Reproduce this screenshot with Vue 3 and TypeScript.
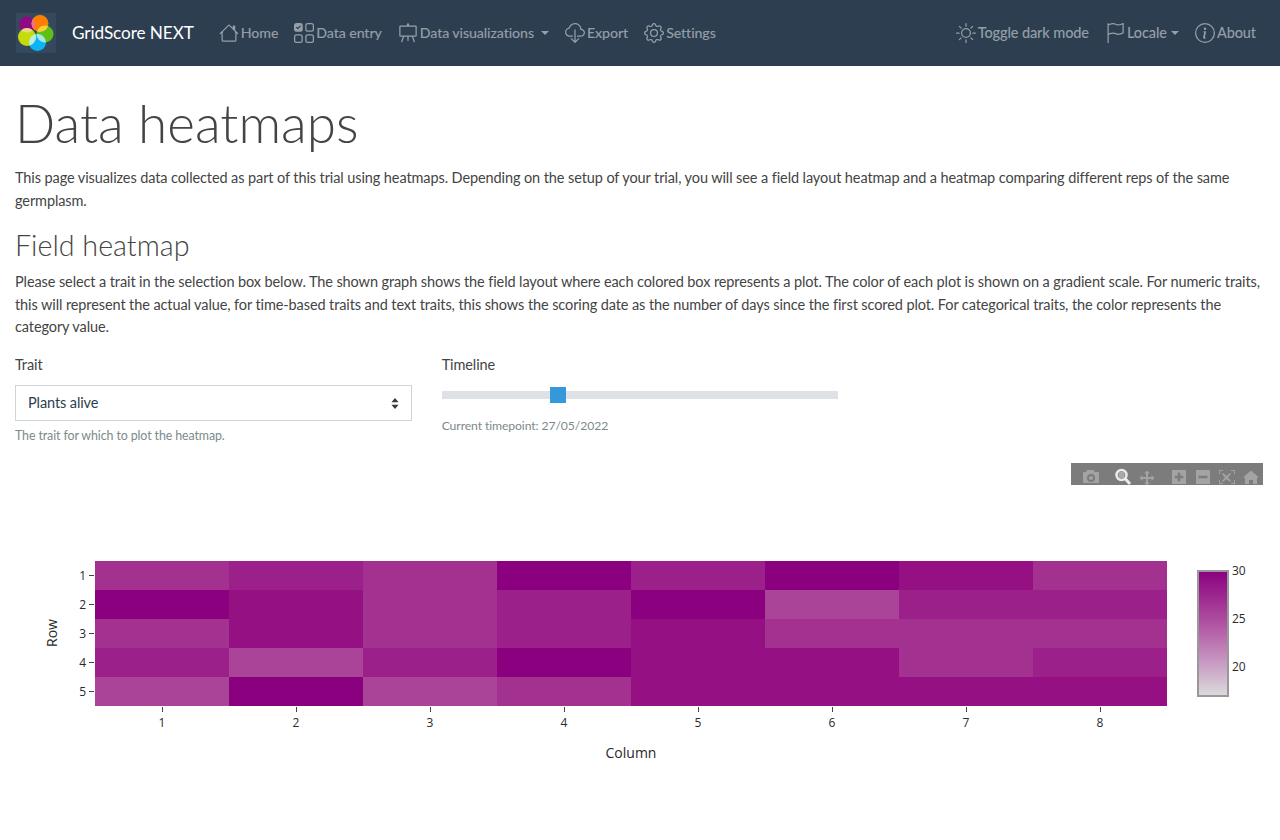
<template>
  <div class="page">
    <nav class="navbar">
      <a class="brand">
        <svg class="logo" width="40" height="40" viewBox="0 0 40 40">
          <defs>
            <clipPath v-for="(petal, i) in petals" :id="`petal-${i}`" :key="i">
              <circle :cx="petal.x" :cy="petal.y" :r="petal.r" />
            </clipPath>
          </defs>
          <rect width="40" height="40" fill="#34495e" />
          <circle v-for="petal in petals" :key="petal.fill" :cx="petal.x" :cy="petal.y" :r="petal.r" :fill="petal.fill" />
          <circle
            v-for="(petal, i) in petals"
            :key="petal.mix"
            :cx="petal.x"
            :cy="petal.y"
            :r="petal.r"
            :fill="petal.mix"
            :clip-path="`url(#petal-${(i + 1) % petals.length})`"
          />
        </svg>
        <span>GridScore NEXT</span>
      </a>
      <ul class="nav-list">
        <li v-for="item in leftNav" :key="item.label" class="nav-item">
          <svg class="bi" viewBox="0 0 16 16" fill="currentColor"><path v-for="d in item.paths" :key="d" fill-rule="evenodd" :d="d" /></svg>
          <span>{{ item.label }}</span>
          <i v-if="item.caret" class="caret" />
        </li>
      </ul>
      <ul class="nav-list right">
        <li v-for="item in rightNav" :key="item.label" class="nav-item">
          <svg class="bi" viewBox="0 0 16 16" fill="currentColor"><path v-for="d in item.paths" :key="d" fill-rule="evenodd" :d="d" /></svg>
          <span>{{ item.label }}</span>
          <i v-if="item.caret" class="caret small" />
        </li>
      </ul>
    </nav>

    <main class="content">
      <h1>Data heatmaps</h1>
      <p>This page visualizes data collected as part of this trial using heatmaps. Depending on the setup of your trial, you will see a field layout heatmap and a heatmap comparing different reps of the same germplasm.</p>
      <h2>Field heatmap</h2>
      <p>Please select a trait in the selection box below. The shown graph shows the field layout where each colored box represents a plot. The color of each plot is shown on a gradient scale. For numeric traits, this will represent the actual value, for time-based traits and text traits, this shows the scoring date as the number of days since the first scored plot. For categorical traits, the color represents the category value.</p>

      <div class="form-row">
        <div class="field">
          <label>Trait</label>
          <div class="select">
            <span>Plants alive</span>
            <svg width="8" height="11" viewBox="0 0 8 11"><path d="M4 0L7.6 4.300H0.4zM4 11L0.4 6.700H7.6z" fill="#343a40" /></svg>
          </div>
          <small class="help">The trait for which to plot the heatmap.</small>
        </div>
        <div class="field">
          <label>Timeline</label>
          <div class="slider"><div class="thumb" /></div>
          <small class="timepoint">Current timepoint: 27/05/2022</small>
        </div>
      </div>

      <div class="plot">
        <div class="modebar">
          <svg width="192" height="22" viewBox="0 0 192 22">
            <g fill="#fff" fill-opacity="0.3">
              <path fill-rule="evenodd" d="M12 9h3l1.5-2h6l1.5 2h3a1 1 0 0 1 1 1v10h-16v-10a1 1 0 0 1 1-1zM20 11a4 4 0 1 0 0 8a4 4 0 0 0 0-8zM20 13a2 2 0 1 1 0 4a2 2 0 0 1 0-4z" />
              <path d="M76 7.5l3 3h-2v3.500h3.500v-2l3 3l-3 3v-2h-3.500v3.500h2l-3 3l-3-3h2v-3.500h-3.500v2l-3-3l3-3v2h3.500v-3.500h-2z" />
              <path fill-rule="evenodd" d="M101 7h14v14h-14zM106.700 12.700v-3h2.600v3h3v2.600h-3v3h-2.600v-3h-3v-2.600z" />
              <path fill-rule="evenodd" d="M125 7h14v14h-14zM127.500 12.700v2.600h9v-2.600z" />
              <path d="M148 7h4v1h-3v3h-1zM160 7h4v4h-1v-3h-3zM148 17h1v3h3v1h-4zM163 17h1v4h-4v-1h3zM152 10l3.500 3l3.500-3l1 1l-3 3.500l3 3.500l-1 1l-3.500-3l-3.500 3l-1-1l3-3.500l-3-3.500z" />
              <path d="M180 7.500l8 7h-2v6.500h-4v-4h-4v4h-4v-6.500h-2z" />
            </g>
            <g fill="none" stroke="#fff" stroke-opacity="0.85">
              <circle cx="50.500" cy="12" r="5" stroke-width="2.500" />
              <path d="M54.500 16l4.500 5" stroke-width="3" />
            </g>
            <rect x="47.500" y="9" width="6" height="6" fill="#fff" fill-opacity="0.35" />
          </svg>
        </div>
        <svg class="chart" width="1250" height="340" viewBox="0 0 1250 340">
          <defs>
            <linearGradient id="scale" x1="0" y1="0" x2="0" y2="1">
              <stop offset="0" stop-color="#8b007f" />
              <stop offset="0.4" stop-color="#ae4f9f" />
              <stop offset="0.7" stop-color="#c592bf" />
              <stop offset="1" stop-color="#dcdcdc" />
            </linearGradient>
          </defs>
          <g v-for="(row, r) in cells" :key="r">
            <rect
              v-for="(level, c) in row"
              :key="c"
              :x="80 + c * 134"
              :y="98 + r * 29"
              width="134"
              height="29"
              :fill="palette[level]"
            />
            <path :d="`M74 ${112.5 + r * 29}h5`" stroke="#444" />
            <text class="tick" x="71" :y="117 + r * 29" text-anchor="end">{{ r + 1 }}</text>
          </g>
          <g v-for="c in 8" :key="c">
            <path :d="`M${147.5 + (c - 1) * 134} 244v5`" stroke="#444" />
            <text class="tick" :x="147 + (c - 1) * 134" y="264" text-anchor="middle">{{ c }}</text>
          </g>
          <text class="axis-title" x="616" y="295" text-anchor="middle">Column</text>
          <text class="axis-title" transform="translate(42 170) rotate(-90)" text-anchor="middle">Row</text>
          <rect x="1183" y="108" width="30" height="125" fill="url(#scale)" stroke="#999" stroke-width="2" />
          <text class="tick" x="1217" y="112">30</text>
          <text class="tick" x="1217" y="160">25</text>
          <text class="tick" x="1217" y="208">20</text>
        </svg>
      </div>
    </main>
  </div>
</template>

<script setup lang="ts">
interface NavItem {
  label: string
  paths: string[]
  caret?: boolean
}

const icons: Record<string, string[]> = {
  house: [
    'M2 13.5V7h1v6.5a.5.5 0 0 0 .5.5h9a.5.5 0 0 0 .5-.5V7h1v6.5a1.5 1.5 0 0 1-1.5 1.5h-9A1.5 1.5 0 0 1 2 13.5zm11-11V6l-2-2V2.5a.5.5 0 0 1 .5-.5h1a.5.5 0 0 1 .5.5z',
    'M7.293 1.5a1 1 0 0 1 1.414 0l6.647 6.646a.5.5 0 0 1-.708.708L8 2.207 1.354 8.854a.5.5 0 1 1-.708-.708L7.293 1.5z'
  ],
  checks: [
    'M2 10h3a1 1 0 0 1 1 1v3a1 1 0 0 1-1 1H2a1 1 0 0 1-1-1v-3a1 1 0 0 1 1-1zm9-9h3a1 1 0 0 1 1 1v3a1 1 0 0 1-1 1h-3a1 1 0 0 1-1-1V2a1 1 0 0 1 1-1zm0 9a1 1 0 0 0-1 1v3a1 1 0 0 0 1 1h3a1 1 0 0 0 1-1v-3a1 1 0 0 0-1-1h-3zm0-10a2 2 0 0 0-2 2v3a2 2 0 0 0 2 2h3a2 2 0 0 0 2-2V2a2 2 0 0 0-2-2h-3zM2 9a2 2 0 0 0-2 2v3a2 2 0 0 0 2 2h3a2 2 0 0 0 2-2v-3a2 2 0 0 0-2-2H2zm7 2a2 2 0 0 1 2-2h3a2 2 0 0 1 2 2v3a2 2 0 0 1-2 2h-3a2 2 0 0 1-2-2v-3zM0 2a2 2 0 0 1 2-2h3a2 2 0 0 1 2 2v3a2 2 0 0 1-2 2H2a2 2 0 0 1-2-2V2zm5.354.854a.5.5 0 1 0-.708-.708L3 3.793l-.646-.647a.5.5 0 1 0-.708.708l1 1a.5.5 0 0 0 .708 0l2-2z'
  ],
  easel: [
    'M8 0a.5.5 0 0 1 .473.337L9.046 2H14a1 1 0 0 1 1 1v7a1 1 0 0 1-1 1h-1.85l1.323 3.837a.5.5 0 1 1-.946.326L11.092 11H8.5v3a.5.5 0 0 1-1 0v-3H4.908l-1.435 4.163a.5.5 0 1 1-.946-.326L3.85 11H2a1 1 0 0 1-1-1V3a1 1 0 0 1 1-1h4.954L7.527.337A.5.5 0 0 1 8 0zM2 3v7h12V3H2z'
  ],
  cloud: [
    'M4.406 1.342A5.53 5.53 0 0 1 8 0c2.69 0 4.923 2 5.166 4.579C14.758 4.804 16 6.137 16 7.773 16 9.569 14.502 11 12.687 11H10a.5.5 0 0 1 0-1h2.688C13.979 10 15 8.988 15 7.773c0-1.216-1.02-2.228-2.313-2.228h-.5v-.5C12.188 2.825 10.328 1 8 1a4.53 4.53 0 0 0-2.941 1.1c-.757.652-1.153 1.438-1.153 2.055v.448l-.445.049C2.064 4.805 1 5.952 1 7.318 1 8.785 2.23 10 3.781 10H6a.5.5 0 0 1 0 1H3.781C1.708 11 0 9.366 0 7.318c0-1.763 1.266-3.223 2.942-3.593.143-.863.698-1.723 1.464-2.383z',
    'M7.646 15.854a.5.5 0 0 0 .708 0l3-3a.5.5 0 0 0-.708-.708L8.5 14.293V5.5a.5.5 0 0 0-1 0v8.793l-2.146-2.147a.5.5 0 0 0-.708.708l3 3z'
  ],
  gear: [
    'M8 4.754a3.246 3.246 0 1 0 0 6.492 3.246 3.246 0 0 0 0-6.492zM5.754 8a2.246 2.246 0 1 1 4.492 0 2.246 2.246 0 0 1-4.492 0z',
    'M9.796 1.343c-.527-1.79-3.065-1.79-3.592 0l-.094.319a.873.873 0 0 1-1.255.52l-.292-.16c-1.64-.892-3.433.902-2.54 2.541l.159.292a.873.873 0 0 1-.52 1.255l-.319.094c-1.79.527-1.79 3.065 0 3.592l.319.094a.873.873 0 0 1 .52 1.255l-.16.292c-.892 1.64.901 3.434 2.541 2.54l.292-.159a.873.873 0 0 1 1.255.52l.094.319c.527 1.79 3.065 1.79 3.592 0l.094-.319a.873.873 0 0 1 1.255-.52l.292.16c1.64.893 3.434-.902 2.54-2.541l-.159-.292a.873.873 0 0 1 .52-1.255l.319-.094c1.79-.527 1.79-3.065 0-3.592l-.319-.094a.873.873 0 0 1-.52-1.255l.16-.292c.893-1.64-.902-3.433-2.541-2.54l-.292.159a.873.873 0 0 1-1.255-.52l-.094-.319zm-2.633.283c.246-.835 1.428-.835 1.674 0l.094.319a1.873 1.873 0 0 0 2.693 1.115l.291-.16c.764-.415 1.6.42 1.184 1.185l-.159.292a1.873 1.873 0 0 0 1.116 2.692l.318.094c.835.246.835 1.428 0 1.674l-.319.094a1.873 1.873 0 0 0-1.115 2.693l.16.291c.415.764-.42 1.6-1.185 1.184l-.291-.159a1.873 1.873 0 0 0-2.693 1.116l-.094.318c-.246.835-1.428.835-1.674 0l-.094-.319a1.873 1.873 0 0 0-2.692-1.115l-.292.16c-.764.415-1.6-.42-1.184-1.185l.159-.291A1.873 1.873 0 0 0 1.945 8.93l-.319-.094c-.835-.246-.835-1.428 0-1.674l.319-.094A1.873 1.873 0 0 0 3.06 4.377l-.16-.292c-.415-.764.42-1.6 1.185-1.184l.292.159a1.873 1.873 0 0 0 2.692-1.115l.094-.319z'
  ],
  sun: [
    'M8 11a3 3 0 1 1 0-6 3 3 0 0 1 0 6zm0 1a4 4 0 1 0 0-8 4 4 0 0 0 0 8zM8 0a.5.5 0 0 1 .5.5v2a.5.5 0 0 1-1 0v-2A.5.5 0 0 1 8 0zm0 13a.5.5 0 0 1 .5.5v2a.5.5 0 0 1-1 0v-2A.5.5 0 0 1 8 13zm8-5a.5.5 0 0 1-.5.5h-2a.5.5 0 0 1 0-1h2a.5.5 0 0 1 .5.5zM3 8a.5.5 0 0 1-.5.5h-2a.5.5 0 0 1 0-1h2A.5.5 0 0 1 3 8zm10.657-5.657a.5.5 0 0 1 0 .707l-1.414 1.415a.5.5 0 1 1-.707-.708l1.414-1.414a.5.5 0 0 1 .707 0zm-9.193 9.193a.5.5 0 0 1 0 .707L3.05 13.657a.5.5 0 0 1-.707-.707l1.414-1.414a.5.5 0 0 1 .707 0zm9.193 2.121a.5.5 0 0 1-.707 0l-1.414-1.414a.5.5 0 0 1 .707-.707l1.414 1.414a.5.5 0 0 1 0 .707zM4.464 4.465a.5.5 0 0 1-.707 0L2.343 3.05a.5.5 0 1 1 .707-.707l1.414 1.414a.5.5 0 0 1 0 .708z'
  ],
  flag: [
    'M14.778.085A.5.5 0 0 1 15 .5V8a.5.5 0 0 1-.314.464L14.5 8l.186.464-.003.001-.006.003-.023.009a12.435 12.435 0 0 1-.397.15c-.264.095-.631.223-1.047.35-.816.252-1.879.523-2.71.523-.847 0-1.548-.28-2.158-.525l-.028-.01C7.68 8.71 7.14 8.5 6.5 8.5c-.7 0-1.638.23-2.437.477A19.626 19.626 0 0 0 3 9.342V15.5a.5.5 0 0 1-1 0V.5a.5.5 0 0 1 1 0v.282c.226-.079.496-.17.79-.26C4.606.272 5.67 0 6.5 0c.84 0 1.524.277 2.121.519l.043.018C9.286.788 9.828 1 10.5 1c.7 0 1.638-.23 2.437-.477a19.587 19.587 0 0 0 1.349-.476l.019-.007.004-.002h.001M14 1.221c-.22.078-.48.167-.766.255-.81.252-1.872.523-2.734.523-.886 0-1.592-.286-2.203-.534l-.008-.003C7.662 1.21 7.139 1 6.5 1c-.669 0-1.606.229-2.415.478A21.294 21.294 0 0 0 3 1.845v6.433c.22-.078.48-.167.766-.255C4.576 7.77 5.638 7.5 6.5 7.5c.847 0 1.548.28 2.158.525l.028.01C9.32 8.29 9.86 8.5 10.5 8.5c.668 0 1.606-.229 2.415-.478A21.317 21.317 0 0 0 14 7.655V1.222z'
  ],
  info: [
    'M8 15A7 7 0 1 1 8 1a7 7 0 0 1 0 14zm0 1A8 8 0 1 0 8 0a8 8 0 0 0 0 16z',
    'm8.93 6.588-2.29.287-.082.38.45.083c.294.07.352.176.288.469l-.738 3.468c-.194.897.105 1.319.808 1.319.545 0 1.178-.252 1.465-.598l.088-.416c-.2.176-.492.246-.686.246-.275 0-.375-.193-.304-.533L8.93 6.588zM9 4.5a1 1 0 1 1-2 0 1 1 0 0 1 2 0z'
  ]
}

const leftNav: NavItem[] = [
  { label: 'Home', paths: icons.house },
  { label: 'Data entry', paths: icons.checks },
  { label: 'Data visualizations', paths: icons.easel, caret: true },
  { label: 'Export', paths: icons.cloud },
  { label: 'Settings', paths: icons.gear }
]

const rightNav: NavItem[] = [
  { label: 'Toggle dark mode', paths: icons.sun },
  { label: 'Locale', paths: icons.flag, caret: true },
  { label: 'About', paths: icons.info }
]

// logo circles, mix = colour where a circle overlaps the next one
const petals = [
  { x: 11, y: 11.5, r: 8, fill: '#8d0a84', mix: '#f2708c' },
  { x: 24, y: 10.5, r: 8.5, fill: '#ff8000', mix: '#f8cf3c' },
  { x: 29, y: 21, r: 8.5, fill: '#61bf14', mix: '#a8e8d8' },
  { x: 21.5, y: 29.5, r: 8.5, fill: '#0db4f5', mix: '#b8eee4' },
  { x: 11, y: 24, r: 9, fill: '#c4dc0c', mix: '#ecd68c' }
]

const palette = ['#8b007f', '#951083', '#9c2089', '#a3318f', '#a94498']

const cells = [
  [3, 2, 3, 0, 2, 0, 1, 3],
  [0, 1, 3, 2, 0, 4, 2, 2],
  [3, 1, 3, 2, 1, 3, 3, 3],
  [2, 4, 2, 0, 1, 1, 3, 2],
  [4, 0, 4, 3, 1, 1, 1, 1]
]
</script>

<style>
html,
body {
  margin: 0;
  background: #fff;
}
</style>

<style scoped>
.page {
  font-family: Lato, "Noto Sans", sans-serif;
  font-size: 14.5px;
  letter-spacing: -0.1px;
  line-height: 22.5px;
  color: #444;
}

.navbar {
  display: flex;
  align-items: center;
  height: 66px;
  padding: 0 16px 0 16px;
  background: #2c3e50;
  box-sizing: border-box;
}

.brand {
  display: flex;
  align-items: center;
  gap: 16px;
  margin-right: 17px;
  color: #fff;
  font-size: 17.2px;
}

.logo {
  display: block;
}

.nav-list {
  display: flex;
  margin: 0;
  padding: 0;
  list-style: none;
  font-size: 14.2px;
}

.nav-list.right {
  margin-left: auto;
  font-size: 14.5px;
}

.nav-item {
  display: flex;
  align-items: center;
  gap: 2px;
  padding: 0 8px;
  color: rgba(255, 255, 255, 0.5);
  font-weight: 500;
}

.bi {
  width: 20px;
  height: 20px;
  display: block;
}

.caret {
  width: 0;
  height: 0;
  margin-left: 5px;
  border-top: 4.5px solid currentColor;
  border-left: 4.5px solid transparent;
  border-right: 4.5px solid transparent;
}

.caret.small {
  margin-left: 2px;
}

.content {
  padding: 0 15px;
}

h1 {
  margin: 23px 0 11px;
  font-size: 53px;
  line-height: 67px;
  font-weight: 300;
  letter-spacing: 0;
  color: #444;
}

h2 {
  margin: 15px 0 8px;
  font-size: 28.7px;
  line-height: 36px;
  font-weight: 300;
  letter-spacing: 0;
}

p {
  margin: 0;
}

.form-row {
  display: grid;
  grid-template-columns: repeat(3, 1fr);
  gap: 30px;
  margin-top: 15px;
}

.field label {
  display: block;
  margin-bottom: 9px;
}

.select {
  display: flex;
  align-items: center;
  justify-content: space-between;
  height: 36px;
  box-sizing: border-box;
  padding: 0 12px 0 12px;
  border: 1px solid #ced4da;
  color: #2c3e50;
}

small {
  display: block;
  line-height: 20px;
  color: #7b8a8b;
}

.help {
  margin-top: 5px;
  font-size: 12.4px;
}

.slider {
  position: relative;
  height: 8px;
  margin: 15px 0 0;
  background: #dee2e6;
}

.thumb {
  position: absolute;
  left: 108px;
  top: -4px;
  width: 16px;
  height: 16px;
  background: #3498db;
}

.timepoint {
  margin-top: 17px;
  font-size: 12.2px;
}

.plot {
  position: relative;
  margin-top: 17px;
}

.modebar {
  position: absolute;
  top: 0;
  right: 2px;
  width: 192px;
  height: 22px;
  background: rgba(68, 68, 68, 0.7);
}

.modebar svg {
  display: block;
}

.chart {
  display: block;
}

.tick,
.axis-title {
  font-family: "Open Sans", sans-serif;
  fill: #2a2a2a;
  letter-spacing: 0;
}

.tick {
  font-size: 12px;
}

.axis-title {
  font-size: 14px;
}
</style>
